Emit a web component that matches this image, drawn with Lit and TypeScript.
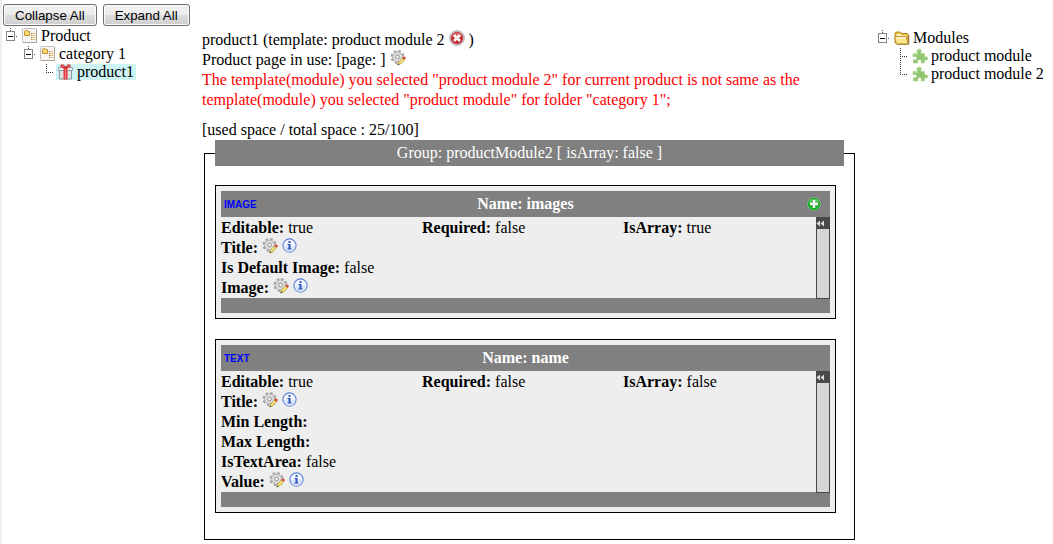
import { LitElement, html, svg, css, nothing } from "lit";
import { customElement, property, state } from "lit/decorators.js";

type IconName = "list" | "gift" | "folder" | "puzzle" | "gear" | "info" | "remove" | "add";

interface TreeItem {
  label: string;
  icon: IconName;
  selected?: boolean;
  children?: TreeItem[];
}

interface FieldRow {
  label: string;
  value?: string;
  editable?: boolean;
}

interface Field {
  type: string;
  name: string;
  isArray: boolean;
  rows: FieldRow[];
}

const ART = {
  list: svg`
    <rect x="0.5" y="0.5" width="14" height="14" rx="1" fill="#f8f5f2" stroke="#c4bfba"/>
    <path d="M1 14.500h13.500V1" fill="none" stroke="#a8a39f"/>
    <path d="M2.500 7.500v-4l.7-1h1.600l.7 1h2v4z" fill="#f8d777" stroke="#c2922f"/>
    <path d="M10 5.500h3.500M10 7.500h3.500M10 9.500h3.500M10 11.500h3.500" stroke="#e2bd82"/>
    <path d="M9 5.500h1M9 7.500h1M9 9.500h1M9 11.500h1" stroke="#a5752c"/>`,
  gift: svg`
    <path d="M1.500 6.500h12v8.500h-12z" fill="#dce4e4" stroke="#8b9a9b"/>
    <path d="M.5 3.500h14v3H.5z" fill="#eef3f3" stroke="#95a2a3"/>
    <path d="M5.500 3h4v12.500h-4z" fill="#de343c"/>
    <path d="M7 5h1v10H7z" fill="#f7898b"/>
    <path d="M7.500 3.600C5 4 2.500 3 2.600 1.800 2.800.3 6.300.3 7.500 3.600zM7.500 3.600c2.500.4 5-.6 4.900-1.800C12.200.3 8.700.3 7.500 3.600z" fill="#ef6468" stroke="#cc2a32"/>`,
  folder: svg`
    <path d="M1 13V3.500L2.300 2h4l1.400 1.600h5.800L14.300 5v8z" fill="#e3b53c" stroke="#b58317"/>
    <path d="M2.800 6V3.800h3.700L8 5.300h5V6z" fill="#fff5c2"/>
    <path d="M.7 6.500h11.500l1.700 7.500H2.400z" fill="#ffe78e" stroke="#c39a35" stroke-linejoin="round"/>
    <path d="M2 7.800h9.300" stroke="#fffbe0" stroke-width="1.200"/>
    <path d="M14.800 5.500v8.800H3" fill="none" stroke="#866a29" stroke-width=".8"/>`,
  puzzle: svg`
    <path d="M1 5.500h4.300c.4-.8-.5-1.300-.4-2.400C5 1.700 6 1 7.200 1s2.100.8 2.100 2c0 1.100-.9 1.600-.5 2.500h3.700V9c.8.300 1.100-.4 1.900-.3.900.1 1.300.9 1.300 1.800s-.5 1.700-1.400 1.700c-.8 0-1.100-.6-1.800-.3V15H9.100c-.3-.8.4-1.100.3-1.900-.1-.9-.9-1.300-1.900-1.300s-1.800.5-1.800 1.400c0 .8.600 1.100.3 1.800H1.300v-3.300c.8-.4 1.200.3 2 .2.900-.1 1.400-.8 1.400-1.700s-.6-1.600-1.500-1.600C2.300 8.600 1.900 9.200 1 8.900z" fill="#90c670" stroke="#b4d99b" stroke-width=".7"/>
    <path d="M2 6.300h4.300M6.300 2.600c.4-.6 1.300-.5 1.600 0" fill="none" stroke="#bfe2a5" stroke-width=".9"/>`,
  gear: svg`
    <circle cx="7.500" cy="7" r="6" fill="none" stroke="#a3a3a3" stroke-width="2" stroke-dasharray="2.600 2.112"/>
    <circle cx="7.500" cy="7" r="5" fill="#d2d2d2" stroke="#a8a8a8" stroke-width=".8"/>
    <circle cx="7.500" cy="7" r="3.500" fill="none" stroke="#e8e8e8" stroke-width="1"/>
    <circle cx="7.500" cy="7" r="1.900" fill="#f6f6f6" stroke="#8f8f8f" stroke-width=".9"/>
    <path d="M7.800 14.700l.8-2.700 4-4 2 2-4.200 4z" fill="#f7dc4e" stroke="#94802f" stroke-width=".6"/>
    <path d="M9.400 12.700l4.200-4.100" stroke="#fff7b4" stroke-width=".8"/>
    <path d="M12.600 7.700l1-1c.6-.5 2.300 1.200 1.800 1.800l-1 1z" fill="#e4473d" stroke="#b53c34" stroke-width=".5"/>
    <path d="M7.500 15.200l.5-1.800 1.400 1.300z" fill="#332c1c"/>`,
  info: svg`
    <circle cx="7.500" cy="7.500" r="6.600" fill="#f4f7ff" stroke="#5b7fd6" stroke-width="1.100"/>
    <path d="M2 8.300a5.500 5.500 0 0 0 11 0c-2.800-1.300-8.200-1.300-11 0z" fill="#dbe4f9"/>
    <rect x="6.500" y="3" width="2" height="2" rx=".5" fill="#2854bb"/>
    <path d="M5.500 6h3v4.500h1v1h-4v-1h1V7h-1z" fill="#2854bb"/>`,
  remove: svg`
    <circle cx="8" cy="8" r="7.400" fill="#e6e6e6" stroke="#a5a5a5" stroke-width=".9"/>
    <circle cx="8" cy="8" r="6" fill="#c8282c" stroke="#a24447" stroke-width=".7"/>
    <path d="M2.900 6.800a5.200 5.200 0 0 1 10.200 0c-3 1.200-7.200 1.200-10.200 0z" fill="#db6060"/>
    <path d="M5 5l6 6M11 5l-6 6" stroke="#fff" stroke-width="2.600"/>
    <rect x="7.300" y="7.300" width="1.400" height="1.400" fill="#e9b4b4"/>`,
  add: svg`
    <circle cx="8" cy="8" r="7.400" fill="#dfe3dd" stroke="#6c6c6c" stroke-width=".9"/>
    <circle cx="8" cy="8" r="6.200" fill="#1fb02a" stroke="#16841e" stroke-width=".7"/>
    <path d="M2.600 7.200a5.500 5.500 0 0 1 10.800 0c-3 1-7.800 1-10.800 0z" fill="#57c45d"/>
    <path d="M8 4v8M4 8h8" stroke="#f2f2f2" stroke-width="2.400"/>`,
};

const icon = (name: IconName) =>
  html`<svg class="icon" width="16" height="16" viewBox="0 0 16 16" aria-hidden="true">${ART[name]}</svg>`;

const iconStyles = css`
  .icon {
    display: block;
    width: 16px;
    height: 16px;
  }
  .icon-button {
    display: inline-block;
    width: 16px;
    height: 16px;
    margin: 0;
    padding: 0;
    border: 0;
    background: none;
    vertical-align: top;
    cursor: pointer;
  }
`;

@customElement("tree-view")
class TreeView extends LitElement {
  @property({ attribute: false }) items: TreeItem[] = [];
  @state() private closed = new Set<string>();

  static styles = [
    iconStyles,
    css`
      :host {
        display: block;
      }
      .list {
        margin: 0;
        padding: 0;
        list-style: none;
      }
      .list .list {
        padding-left: 18px;
      }
      .row {
        display: flex;
        height: 18px;
        align-items: center;
        white-space: nowrap;
      }
      .joint {
        display: block;
        flex: none;
        width: 18px;
        height: 18px;
        margin: 0;
        padding: 0;
        border: 0;
        background: none;
      }
      .joint svg {
        display: block;
      }
      .node {
        display: flex;
        align-items: center;
        gap: 3px;
        height: 16px;
        padding: 0 2px;
        line-height: 16px;
        color: #000;
        text-decoration: none;
      }
      .selected {
        background: #cdf3f4;
      }
    `,
  ];

  collapseAll() {
    const names = new Set<string>();
    const visit = (items: TreeItem[]) =>
      items.forEach((item) => {
        if (item.children) {
          names.add(item.label);
          visit(item.children);
        }
      });
    visit(this.items);
    this.closed = names;
  }

  expandAll() {
    this.closed = new Set();
  }

  private toggle(label: string) {
    const next = new Set(this.closed);
    if (!next.delete(label)) next.add(label);
    this.closed = next;
  }

  private renderExpander(item: TreeItem) {
    const closed = this.closed.has(item.label);
    return html`<button
      class="joint"
      aria-label="Toggle ${item.label}"
      aria-expanded=${closed ? "false" : "true"}
      @click=${() => this.toggle(item.label)}
    >
      <svg width="18" height="18" viewBox="0 0 18 18" aria-hidden="true">
        <path d="M8.500 1v4M14 9.500h2" stroke="#555" stroke-dasharray="1 1" />
        <rect x="4.500" y="4.500" width="8" height="9" fill="#fff" stroke="#848484" />
        <path d="M6 9.500h5" stroke="#000" />
        ${closed ? svg`<path d="M8.500 7v5" stroke="#000"/>` : nothing}
      </svg>
    </button>`;
  }

  private renderBranch(last: boolean) {
    return html`<span class="joint">
      <svg width="18" height="18" viewBox="0 0 18 18" aria-hidden="true">
        <path d="M8.500 1V${last ? 10 : 18}M10 9.500h6" stroke="#333" stroke-dasharray="1 1" fill="none" />
      </svg>
    </span>`;
  }

  private renderItems(items: TreeItem[]): unknown {
    return html`<ul class="list">
      ${items.map(
        (item, i) => html`<li>
          <div class="row">
            ${item.children ? this.renderExpander(item) : this.renderBranch(i === items.length - 1)}
            <a class="node ${item.selected ? "selected" : ""}" href="#">${icon(item.icon)}<span>${item.label}</span></a>
          </div>
          ${item.children && !this.closed.has(item.label) ? this.renderItems(item.children) : nothing}
        </li>`
      )}
    </ul>`;
  }

  render() {
    return this.renderItems(this.items);
  }
}

@customElement("field-card")
class FieldCard extends LitElement {
  @property({ attribute: false }) field!: Field;

  static styles = [
    iconStyles,
    css`
      :host {
        display: block;
        padding: 5px;
        border: 1px solid #000;
        background: #eee;
      }
      .head {
        display: grid;
        grid-template-columns: 1fr auto 1fr;
        align-items: center;
        height: 26px;
        background: #808080;
      }
      .type {
        padding: 1px 0 0 3px;
        font: bold 10px/25px "Liberation Sans", Arial, sans-serif;
        color: #00f;
      }
      .name {
        margin: 0;
        font-size: 16px;
        line-height: 26px;
        color: #fff;
      }
      .head .icon-button {
        justify-self: end;
        margin-right: 8px;
      }
      .body {
        display: flex;
      }
      .info {
        flex: 1;
        min-width: 0;
        padding-top: 1px;
      }
      .flags {
        display: grid;
        grid-template-columns: 201fr 201fr 193fr;
      }
      .line {
        height: 20px;
        line-height: 20px;
      }
      .strip {
        display: flex;
        flex-direction: column;
        position: relative;
        width: 14px;
        margin-bottom: -1px;
      }
      .fold {
        display: block;
        height: 12px;
        margin: 0;
        padding: 0;
        border: 0;
        background: #484848;
        cursor: pointer;
      }
      .fold svg {
        display: block;
      }
      .track {
        flex: 1;
        border: 1px solid #484848;
        border-top: 0;
        background: #d6d6d6;
      }
      .foot {
        height: 15px;
        background: #808080;
      }
    `,
  ];

  render() {
    const f = this.field;
    return html`
      <div class="head">
        <span class="type">${f.type}</span>
        <h3 class="name">Name: ${f.name}</h3>
        ${f.isArray ? html`<button class="icon-button" aria-label="Add item">${icon("add")}</button>` : html`<span></span>`}
      </div>
      <div class="body">
        <div class="info">
          <div class="flags">
            <div class="line"><b>Editable:</b> true</div>
            <div class="line"><b>Required:</b> false</div>
            <div class="line"><b>IsArray:</b> ${f.isArray}</div>
          </div>
          ${f.rows.map(
            (row) => html`<div class="line">
              <b>${row.label}:</b> ${row.value ?? nothing}${row.editable
                ? html`<button class="icon-button" aria-label="Edit ${row.label}">${icon("gear")}</button>
                    <button class="icon-button" aria-label="About ${row.label}">${icon("info")}</button>`
                : nothing}
            </div>`
          )}
        </div>
        <div class="strip">
          <button class="fold" aria-label="Fold panel">
            <svg width="14" height="12" viewBox="0 0 14 12" aria-hidden="true">
              <path d="M.5 6.500l3.500-3v6zM4.500 6.500l3.500-3v6z" fill="#dedede" />
            </svg>
          </button>
          <div class="track"></div>
        </div>
      </div>
      <div class="foot"></div>
    `;
  }
}

const PRODUCTS: TreeItem[] = [
  {
    label: "Product",
    icon: "list",
    children: [{ label: "category 1", icon: "list", children: [{ label: "product1", icon: "gift", selected: true }] }],
  },
];

const MODULES: TreeItem[] = [
  {
    label: "Modules",
    icon: "folder",
    children: [
      { label: "product module", icon: "puzzle" },
      { label: "product module 2", icon: "puzzle" },
    ],
  },
];

const FIELDS: Field[] = [
  {
    type: "IMAGE",
    name: "images",
    isArray: true,
    rows: [
      { label: "Title", editable: true },
      { label: "Is Default Image", value: "false" },
      { label: "Image", editable: true },
    ],
  },
  {
    type: "TEXT",
    name: "name",
    isArray: false,
    rows: [
      { label: "Title", editable: true },
      { label: "Min Length" },
      { label: "Max Length" },
      { label: "IsTextArea", value: "false" },
      { label: "Value", editable: true },
    ],
  },
];

@customElement("app-root")
class AppRoot extends LitElement {
  static styles = [
    iconStyles,
    css`
      :host {
        display: grid;
        grid-template-columns: 200px minmax(0, 1fr) 196px;
        box-sizing: border-box;
        min-height: 100vh;
        border-left: 2px solid #f0f0f0;
        background: #fff;
        color: #000;
        font: 16px/20px "Liberation Serif", "Times New Roman", serif;
      }
      .toolbar {
        display: flex;
        gap: 6px;
        padding: 4px 0 1px 1px;
      }
      .tool {
        height: 22px;
        padding: 0 11px;
        border: 1px solid #707070;
        border-radius: 3px;
        background: linear-gradient(#f3f3f3, #ebebeb 50%, #dddddd 50%, #cfcfcf);
        box-shadow: inset 0 0 0 1px #fafafa;
        font-family: "Liberation Sans", Arial, sans-serif;
        color: #000;
        white-space: nowrap;
      }
      .modules {
        padding: 29px 0 0 17px;
      }
      .detail {
        padding-top: 30px;
      }
      .text {
        margin: 0;
      }
      .warning {
        margin: 0 0 10px;
        color: #f00;
      }
      .group {
        min-width: 0;
        margin: 0 2px;
        padding: 19px 10px 26px;
        border: 1px solid #000;
      }
      .title {
        box-sizing: border-box;
        width: 100%;
        padding: 3px 0;
        background: #808080;
        color: #fff;
        text-align: center;
      }
      .cards {
        display: grid;
        gap: 20px;
        margin-right: 8px;
      }
    `,
  ];

  private get productTree() {
    return this.renderRoot.querySelector<TreeView>(".products")!;
  }

  render() {
    return html`
      <nav>
        <div class="toolbar">
          <button class="tool" @click=${() => this.productTree.collapseAll()}>Collapse All</button>
          <button class="tool" @click=${() => this.productTree.expandAll()}>Expand All</button>
        </div>
        <tree-view class="products" .items=${PRODUCTS}></tree-view>
      </nav>
      <main class="detail">
        <p class="text">
          product1 (template: product module 2
          <button class="icon-button" aria-label="Remove template">${icon("remove")}</button> )
        </p>
        <p class="text">
          Product page in use: [page: ]
          <button class="icon-button" aria-label="Edit page">${icon("gear")}</button>
        </p>
        <p class="warning">
          The template(module) you selected "product module 2" for current product is not same as the template(module)
          you selected "product module" for folder "category 1";
        </p>
        <p class="text">[used space / total space : 25/100]</p>
        <fieldset class="group">
          <legend class="title">Group: productModule2 [ isArray: false ]</legend>
          <div class="cards">${FIELDS.map((field) => html`<field-card .field=${field}></field-card>`)}</div>
        </fieldset>
      </main>
      <aside class="modules">
        <tree-view .items=${MODULES}></tree-view>
      </aside>
    `;
  }
}
